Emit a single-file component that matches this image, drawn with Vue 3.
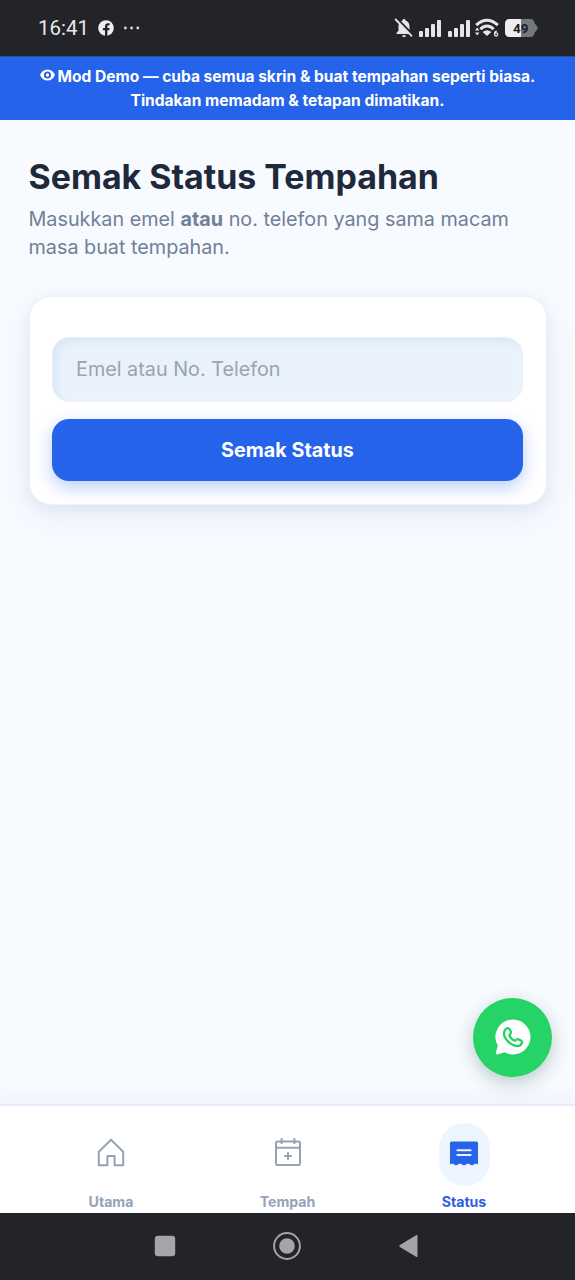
<script setup>
import { ref } from 'vue'

const contact = ref('')
const signalHeights = [6, 9, 13, 17]
</script>

<template>
  <div class="screen">
    <header class="statusbar">
      <span class="clock">16:41</span>
      <svg class="fb" width="16" height="16" viewBox="0 0 16 16">
        <circle cx="8" cy="8" r="7.8" fill="#eeeeef" />
        <path d="M7 16V10.2H4.9V7.9H7V6.4C7 4.3 8.2 3.2 10.1 3.2H11.7V5.3H10.6C9.7 5.3 9.4 5.8 9.4 6.5V7.9H11.6L11.2 10.2H9.4V16Z" fill="#232429" />
      </svg>
      <svg class="dots" width="18" height="4" viewBox="0 0 18 4" fill="#dddddf">
        <circle cx="2.4" cy="2" r="1.4" /><circle cx="8.6" cy="2" r="1.4" /><circle cx="14.8" cy="2" r="1.4" />
      </svg>
      <div class="indicators">
        <svg width="20" height="20" viewBox="0 0 20 20">
          <path d="M10 1C10.9 1 11.5 1.6 11.5 2.4C14 3.1 15.5 5.3 15.5 8V12.5L17.5 15V16H2.5V15L4.5 12.5V8C4.5 5.3 6 3.1 8.5 2.4C8.5 1.6 9.1 1 10 1Z" fill="#e6e6e7" />
          <path d="M8 17.3H12Q11.7 19.2 10 19.2T8 17.3Z" fill="#e6e6e7" />
          <path d="M2.5 0L20 18" stroke="#232429" stroke-width="2.2" />
          <path d="M1.2 1L18 18.3" stroke="#e6e6e7" stroke-width="1.8" />
        </svg>
        <svg v-for="n in 2" :key="n" class="signal" width="22" height="18" viewBox="0 0 22 18" fill="#e6e6e7">
          <rect v-for="(h, i) in signalHeights" :key="i" :x="i * 6" :y="18 - h" width="4" :height="h" rx="1" />
        </svg>
        <svg class="wifi" width="24" height="20" viewBox="0 0 24 20">
          <g fill="none" stroke="#e6e6e7" stroke-width="3">
            <path d="M1.2 7.1Q6.5 2.2 12 2.2T22.8 7.1" />
            <path d="M5.4 11.2Q8.3 8.1 12 8.1T18.6 11.2" />
          </g>
          <path d="M7.6 14Q12 10.6 16.4 14L12 18Z" fill="#e6e6e7" />
          <path d="M0 12.5L2.2 9.5L4.4 12.5ZM0 14.5L2.2 17.5L4.4 14.5Z" fill="#e6e6e7" />
          <path d="M21.8 13.2Q19.5 13.5 19.5 16.3A1.6 1.6 0 1 0 21 14.8Q20 14.8 19.5 16" fill="none" stroke="#e6e6e7" stroke-width="1.3" />
        </svg>
        <div class="battery">
          <svg width="33" height="18" viewBox="0 0 33 18">
            <path d="M5 0H25Q29 0 29.5 4L32.2 7.5Q33 9 32.2 10.5L29.5 14Q29 18 25 18H5Q0 18 0 13V5Q0 0 5 0Z" fill="#77787b" />
            <path d="M5 0H16V18H5Q0 18 0 13V5Q0 0 5 0Z" fill="#eeeeef" />
          </svg>
          <span class="level">49</span>
        </div>
      </div>
    </header>

    <div class="demo">
      <p><svg class="eye" width="15" height="12" viewBox="0 0 15 12">
          <path d="M7.5 .4C11 .4 13.6 2.6 15 6C13.6 9.4 11 11.6 7.5 11.6S1.4 9.4 0 6C1.4 2.6 4 .4 7.5 .4Z" fill="#fff" />
          <circle cx="7.5" cy="6" r="2.6" fill="#fff" stroke="#2563eb" stroke-width="1.9" />
        </svg> Mod Demo — cuba semua skrin &amp; buat tempahan seperti biasa.</p>
      <p>Tindakan memadam &amp; tetapan dimatikan.</p>
    </div>

    <main class="content">
      <h1>Semak Status Tempahan</h1>
      <p class="lead">Masukkan emel <strong>atau</strong> no. telefon yang sama macam masa buat tempahan.</p>
      <form class="card" @submit.prevent>
        <input v-model="contact" type="text" placeholder="Emel atau No. Telefon" />
        <button type="submit">Semak Status</button>
      </form>
    </main>

    <a class="whatsapp">
      <svg width="36" height="36" viewBox="0 0 36 36">
        <path d="M18 .6A17.4 17.4 0 1 1 9.8 33.3L2.2 35.4Q.5 35.6.8 33.9L2.8 26.7A17.4 17.4 0 0 1 18 .6Z" fill="#fff" />
        <path d="M9.3 12.5C9.9 10.8 11.3 9.3 12.7 9.1C13.6 9 14.1 9.3 14.5 10.1L15.9 13C16.3 14 15.7 14.6 14.3 16.2C15.1 18.5 17.5 20.8 19.9 21.8C21.6 20.2 22.2 19.7 23.1 20.1L26.3 21.7C27.1 22.1 27.3 22.7 27 23.7C26.4 25.7 24.6 27.1 22.4 27.1C15.8 27 9 19.7 9 14.3Z" fill="none" stroke="#25d366" stroke-width="2.3" stroke-linejoin="round" />
      </svg>
    </a>

    <nav class="tabs">
      <div class="tab">
        <span class="pill">
          <svg width="30" height="30" viewBox="0 0 30 30" fill="none" stroke="#94a3b8" stroke-width="2" stroke-linejoin="round">
            <path d="M2.8 27.2V13.7L15 1.7L27.2 13.7V27.2H18.6V18H11.4V27.2Z" />
          </svg>
        </span>
        <span>Utama</span>
      </div>
      <div class="tab">
        <span class="pill">
          <svg width="30" height="30" viewBox="0 0 30 30" fill="none" stroke="#94a3b8" stroke-width="2">
            <rect x="3" y="3.4" width="24" height="23.7" rx="1.4" />
            <path d="M3 9.7H27M8.6.3V6.1M21.4.3V6.1M15 14.2V21.8M11.2 18H18.8" />
          </svg>
        </span>
        <span>Tempah</span>
      </div>
      <div class="tab active">
        <span class="pill">
          <svg width="30" height="30" viewBox="0 0 30 30">
            <path d="M2.5 3.6H27.5Q29 3.6 29 5.1V26.6L26.8 25.4L23 27.4L18.9 25.4L15 27.4L11.1 25.4L7 27.4L3.2 25.4L1 26.6V5.1Q1 3.6 2.5 3.6Z" fill="#2563eb" />
            <path d="M7.6 12.2H22.4M7.6 17H22.4" stroke="#eaf3fd" stroke-width="2" />
          </svg>
        </span>
        <span>Status</span>
      </div>
    </nav>

    <footer class="sysnav">
      <svg width="22" height="22" viewBox="0 0 22 22"><rect x=".8" y=".8" width="20.4" height="20.4" rx="3.2" fill="#a5a5a7" /></svg>
      <svg width="28" height="28" viewBox="0 0 28 28"><circle cx="14" cy="14" r="12.9" fill="none" stroke="#a5a5a7" stroke-width="2" /><circle cx="14" cy="14" r="7.8" fill="#a5a5a7" /></svg>
      <svg width="20" height="24" viewBox="0 0 20 24"><path d="M18 1.2V22.8L1 12.6Q0 12 1 11.4Z" fill="#a5a5a7" stroke="#a5a5a7" stroke-linejoin="round" /></svg>
    </footer>
  </div>
</template>

<style>
body {
  background: #f8fafc;
}
</style>

<style scoped>
* {
  box-sizing: border-box;
}
.screen {
  position: relative;
  display: flex;
  flex-direction: column;
  width: 575px;
  height: 1280px;
  overflow: hidden;
  background: #f7faff;
  font-family: Inter, "Liberation Sans", sans-serif;
}
p,
h1 {
  margin: 0;
}
svg {
  flex: none;
}
.statusbar {
  display: flex;
  align-items: center;
  height: 56px;
  flex: none;
  padding: 0 37px 0 38px;
  background: #232429;
}
.clock {
  width: 60px;
  font: 400 20.5px/24px Roboto, sans-serif;
  color: #e8e8e9;
}
.dots {
  margin-left: 9px;
}
.indicators {
  display: flex;
  align-items: center;
  margin-left: auto;
}
.signal {
  margin-left: 5px;
}
.signal + .signal {
  margin-left: 7px;
}
.wifi {
  margin-left: 5px;
}
.battery {
  display: flex;
  position: relative;
  margin-left: 6px;
}
.level {
  position: absolute;
  top: 0;
  left: 8px;
  font: 700 13.5px/18px Roboto, sans-serif;
  color: #1c1d21;
}
.demo {
  flex: none;
  height: 64px;
  padding-top: 8px;
  border-top: 1px solid #274cae;
  background: #2563eb;
  color: #fff;
  font-size: 15.55px;
  font-weight: 700;
  line-height: 24px;
  text-align: center;
  white-space: nowrap;
}
.eye {
  display: inline-block;
  height: 12px;
  margin-right: -1px;
  vertical-align: 1px;
}
.content {
  flex: 1;
  padding: 34px 28.5px 0;
}
h1 {
  font-size: 33.93px;
  font-weight: 700;
  line-height: 45px;
  color: #1e293b;
}
.lead {
  margin-top: 6px;
  font-size: 19.8px;
  line-height: 28.3px;
  color: #718096;
}
.card {
  display: flex;
  flex-direction: column;
  gap: 17px;
  height: 209px;
  margin-top: 34.4px;
  padding: 40px 22.5px 0;
  border: 1px solid #eaf2fc;
  border-radius: 22px;
  background: #fff;
  box-shadow: 0 11px 34px rgba(37, 70, 140, 0.06), 0 5px 14px rgba(30, 90, 150, 0.08);
}
input {
  height: 65px;
  padding: 0 23px;
  border: 1px solid #e9f1fb;
  border-radius: 17px;
  outline: none;
  background: #e9f2fc;
  box-shadow: inset 3px 3px 8px #d7e4f4, inset -3px -3px 8px #f2f7fd;
  font: 400 19.8px Inter, sans-serif;
  color: #1e293b;
}
input::placeholder {
  color: #9ca3af;
}
button {
  height: 62px;
  border: 0;
  border-radius: 17px;
  background: #2563eb;
  box-shadow: 0 6px 18px rgba(37, 99, 235, 0.32);
  color: #fff;
  font: 700 19.8px Inter, sans-serif;
}
.whatsapp {
  position: absolute;
  top: 998px;
  right: 23px;
  display: flex;
  align-items: center;
  justify-content: center;
  width: 79px;
  height: 79px;
  padding-bottom: 1px;
  border-radius: 50%;
  background: #25d366;
  box-shadow: 0 6px 18px rgba(30, 80, 70, 0.27);
}
.tabs {
  display: grid;
  grid-template-columns: repeat(3, 176.5px);
  justify-content: center;
  flex: none;
  height: 109px;
  padding-top: 17px;
  border-top: 2px solid #e4edfb;
  background: #fff;
  box-shadow: 0 -4px 18px rgba(50, 80, 160, 0.05);
}
.tab {
  display: flex;
  flex-direction: column;
  align-items: center;
  gap: 7px;
  font-size: 14.14px;
  font-weight: 700;
  line-height: 18px;
  color: #94a3b8;
}
.pill {
  display: grid;
  place-items: center;
  width: 51px;
  height: 63px;
  padding-bottom: 3px;
  border-radius: 26px;
}
.active {
  color: #2f60dc;
}
.active .pill {
  background: #edf5ff;
}
.sysnav {
  display: grid;
  grid-template-columns: repeat(3, 122px);
  justify-content: center;
  justify-items: center;
  align-items: center;
  flex: none;
  height: 67px;
  padding: 0 1px 1px 0;
  background: #232429;
}
</style>
